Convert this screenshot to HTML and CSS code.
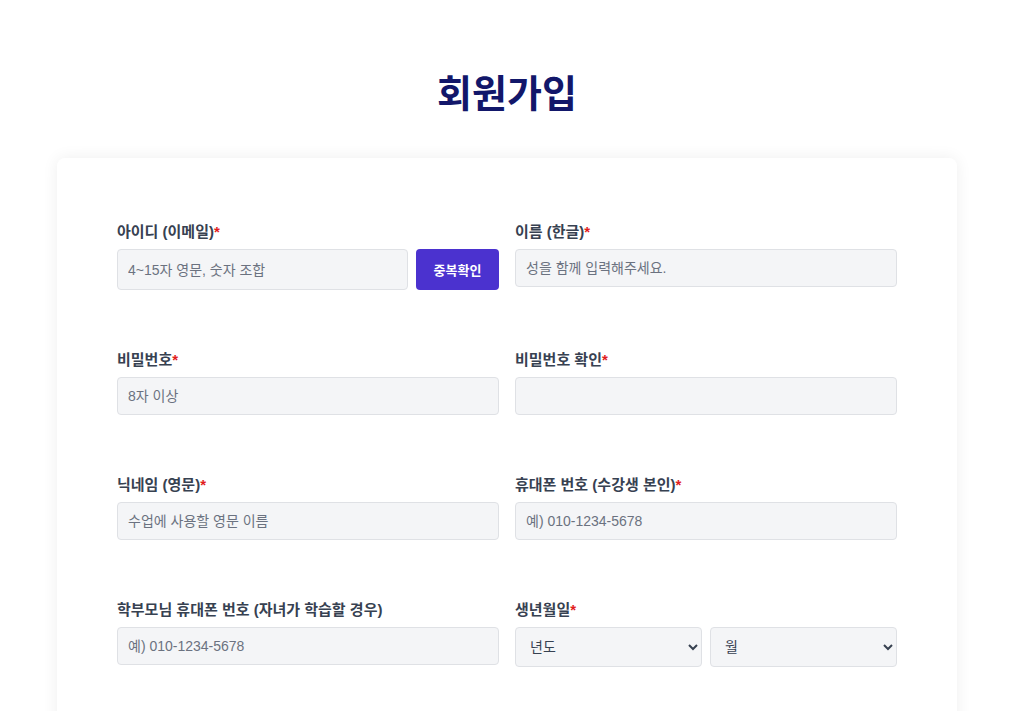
FILE: index.html
```html
<!DOCTYPE html>
<html lang="ko">
<head>
<meta charset="utf-8">
<title>회원가입</title>
<link rel="stylesheet" href="styles.css">
</head>
<body>
<main class="page">
  <h1 class="title">회원가입</h1>
  <section class="card">
    <form class="form-grid">
      <div class="field">
        <label class="label">아이디 (이메일)<span class="req">*</span></label>
        <div class="inline">
          <input class="input" type="text" placeholder="4~15자 영문, 숫자 조합">
          <button type="button" class="btn">중복확인</button>
        </div>
      </div>
      <div class="field">
        <label class="label">이름 (한글)<span class="req">*</span></label>
        <input class="input" type="text" placeholder="성을 함께 입력해주세요.">
      </div>
      <div class="field">
        <label class="label">비밀번호<span class="req">*</span></label>
        <input class="input" type="password" placeholder="8자 이상">
      </div>
      <div class="field">
        <label class="label">비밀번호 확인<span class="req">*</span></label>
        <input class="input" type="password">
      </div>
      <div class="field">
        <label class="label">닉네임 (영문)<span class="req">*</span></label>
        <input class="input" type="text" placeholder="수업에 사용할 영문 이름">
      </div>
      <div class="field">
        <label class="label">휴대폰 번호 (수강생 본인)<span class="req">*</span></label>
        <input class="input" type="text" placeholder="예) 010-1234-5678">
      </div>
      <div class="field">
        <label class="label">학부모님 휴대폰 번호 (자녀가 학습할 경우)</label>
        <input class="input" type="text" placeholder="예) 010-1234-5678">
      </div>
      <div class="field">
        <label class="label">생년월일<span class="req">*</span></label>
        <div class="inline">
          <select class="select"><option>년도</option></select>
          <select class="select"><option>월</option></select>
        </div>
      </div>
    </form>
  </section>
</main>
</body>
</html>
```

FILE: styles.css
```css
* { box-sizing: border-box; }
html, body { margin: 0; padding: 0; background: #ffffff; }
body {
  font-family: "Liberation Sans", "Noto Sans CJK KR", sans-serif;
  color: #374151;
}
.page {
  padding-top: 72px;
  padding-bottom: 60px;
}
.title {
  margin: 0 0 42px;
  text-align: center;
  font-size: 38px;
  line-height: 44px;
  font-weight: 700;
  color: #12176a;
}
.card {
  max-width: 900px;
  margin: 0 auto;
  background: #ffffff;
  border-radius: 8px;
  box-shadow: 0 0 16px rgba(0, 0, 0, 0.07);
  padding: 64px 60px 140px;
}
.form-grid {
  display: grid;
  grid-template-columns: 1fr 1fr;
  column-gap: 16px;
  row-gap: 60px;
}
.field {
  display: flex;
  flex-direction: column;
}
.label {
  display: block;
  font-size: 15px;
  line-height: 20px;
  font-weight: 700;
  color: #374151;
  margin-bottom: 7px;
}
.req { color: #e11d1d; }
.inline {
  display: flex;
  gap: 8px;
}
.input {
  flex: none;
  width: 100%;
  min-width: 0;
  height: 38px;
  padding: 0 10px;
  font-family: inherit;
  font-size: 14px;
  color: #374151;
  background: #f4f5f7;
  border: 1px solid #dfe1e5;
  border-radius: 4px;
  outline: none;
}
.inline .input { flex: 1; height: auto; }
.input::placeholder { color: #6b7280; }
.btn {
  flex: 0 0 83px;
  height: 41px;
  border: none;
  border-radius: 4px;
  background: #4b32cf;
  color: #ffffff;
  font-family: inherit;
  font-size: 13px;
  font-weight: 700;
}
.select {
  flex: 1;
  min-width: 0;
  height: 40px;
  padding: 0 10px;
  font-family: inherit;
  font-size: 14px;
  color: #374151;
  background: #f4f5f7;
  border: 1px solid #dfe1e5;
  border-radius: 4px;
}
```
